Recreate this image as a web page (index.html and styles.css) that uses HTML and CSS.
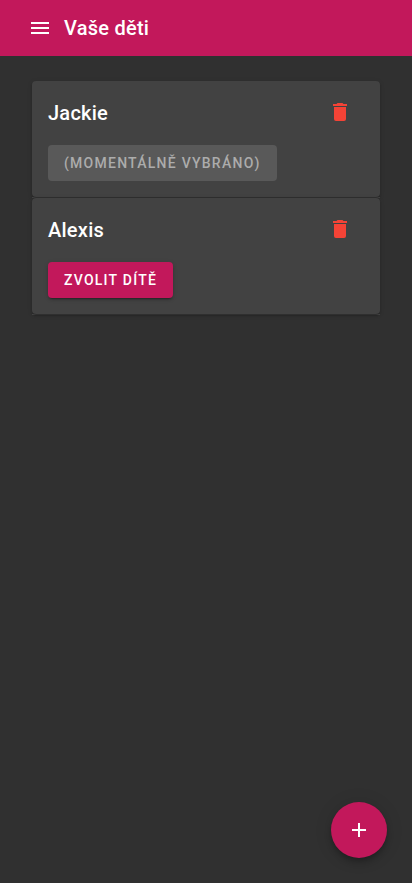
FILE: index.html
```html
<!DOCTYPE html>
<html lang="cs">
<head>
<meta charset="utf-8">
<title>Vaše děti</title>
<link rel="stylesheet" href="styles.css">
</head>
<body>
<header class="toolbar">
  <svg class="icon" viewBox="0 0 24 24"><path d="M3 6h18v2H3V6m0 5h18v2H3v-2m0 5h18v2H3v-2z"/></svg>
  <h1 class="toolbar-title">Vaše děti</h1>
</header>
<main class="list">
  <section class="card">
    <div class="card-title">
      <h2 class="name">Jackie</h2>
      <svg class="icon delete" viewBox="0 0 24 24"><path d="M19 4h-3.500l-1-1h-5l-1 1H5v2h14M6 19a2 2 0 0 0 2 2h8a2 2 0 0 0 2-2V7H6v12z"/></svg>
    </div>
    <div class="actions"><button class="btn btn-disabled" disabled>(momentálně vybráno)</button></div>
  </section>
  <hr class="divider">
  <section class="card">
    <div class="card-title">
      <h2 class="name">Alexis</h2>
      <svg class="icon delete" viewBox="0 0 24 24"><path d="M19 4h-3.500l-1-1h-5l-1 1H5v2h14M6 19a2 2 0 0 0 2 2h8a2 2 0 0 0 2-2V7H6v12z"/></svg>
    </div>
    <div class="actions"><button class="btn">Zvolit dítě</button></div>
  </section>
  <hr class="divider">
</main>
<button class="fab" aria-label="Přidat">
  <svg class="icon" viewBox="0 0 24 24"><path d="M19 13h-6v6h-2v-6H5v-2h6V5h2v6h6v2z"/></svg>
</button>
</body>
</html>
```
FILE: styles.css
```css
* { box-sizing: border-box; }
body {
  margin: 0;
  min-height: 100vh;
  background: #303030;
  color: #fff;
  font-family: Roboto, sans-serif;
}
.icon { width: 24px; height: 24px; fill: currentColor; flex: none; display: block; }
.toolbar {
  height: 56px;
  padding: 0 28px;
  display: flex;
  align-items: center;
  gap: 12px;
  background: #c2185b;
}
.toolbar-title, .name {
  margin: 0;
  font-size: 20px;
  font-weight: 500;
  line-height: 32px;
  letter-spacing: 0.25px;
}
.list { padding: 25px 32px; }
.card {
  position: relative;
  height: 116px;
  padding: 16px;
  border-radius: 4px;
  background: #424242;
  box-shadow: 0 3px 1px -2px rgba(0,0,0,.2), 0 2px 2px 0 rgba(0,0,0,.14), 0 1px 5px 0 rgba(0,0,0,.12);
}
.card-title {
  display: flex;
  justify-content: space-between;
  align-items: center;
  height: 32px;
  padding-right: 12px;
}
.delete { color: #f44336; margin-bottom: 2px; }
.actions { padding-top: 16px; }
.divider { height: 1px; margin: 0; border: 0; background: rgba(255,255,255,.12); }
.btn {
  display: block;
  height: 36px;
  padding: 0 16px;
  border: 0;
  border-radius: 4px;
  background: #c2185b;
  color: #fff;
  font: 500 14px Roboto, sans-serif;
  letter-spacing: 1.25px;
  text-transform: uppercase;
  box-shadow: 0 3px 1px -2px rgba(0,0,0,.2), 0 2px 2px 0 rgba(0,0,0,.14), 0 1px 5px 0 rgba(0,0,0,.12);
}
.btn-disabled { background: #595959; color: #acacac; box-shadow: none; }
.fab {
  position: fixed;
  left: 331px;
  top: 802px;
  width: 56px;
  height: 56px;
  padding: 0;
  display: flex;
  align-items: center;
  justify-content: center;
  border: 0;
  border-radius: 50%;
  background: #c2185b;
  color: #fff;
  box-shadow: 0 3px 5px -1px rgba(0,0,0,.2), 0 6px 10px 0 rgba(0,0,0,.14), 0 1px 18px 0 rgba(0,0,0,.12);
}
```
